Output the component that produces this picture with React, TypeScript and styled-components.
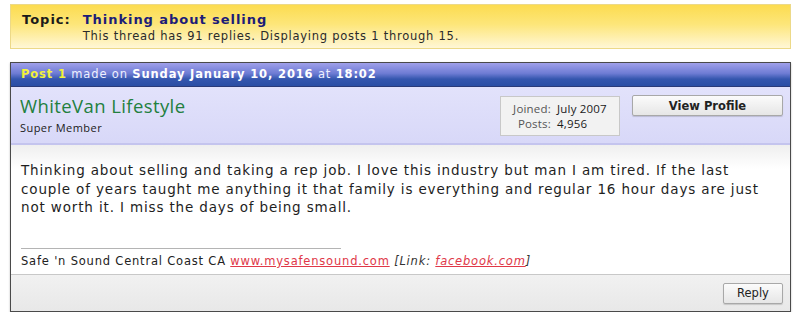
import styled, { createGlobalStyle } from 'styled-components';

const GlobalStyle = createGlobalStyle`
  body {
    margin: 0;
    background: #ffffff;
    font-family: "DejaVu Sans", Verdana, sans-serif;
    color: #222;
  }
`;

const Page = styled.div`
  width: 800px;
  padding: 4px 9px 0 10px;
  box-sizing: border-box;
`;

const TopicBox = styled.div`
  height: 45px;
  box-sizing: border-box;
  border: 1px solid #ecd988;
  background: linear-gradient(to bottom, #fcdc50 0%, #fde67a 45%, #fff7d6 100%);
  display: flex;
  padding: 7px 0 0 11px;
  gap: 12px;
`;

const TopicLabel = styled.div`
  font-size: 13px;
  font-weight: bold;
  letter-spacing: 1px;
  color: #1a1a1a;
  line-height: 16px;
`;

const TopicInfo = styled.div`
  display: flex;
  flex-direction: column;
`;

const TopicTitle = styled.div`
  font-size: 13px;
  font-weight: bold;
  letter-spacing: 0.95px;
  color: #1c1c78;
  line-height: 16px;
`;

const TopicSub = styled.div`
  font-size: 11.5px;
  letter-spacing: 0.75px;
  color: #2a2a2a;
  line-height: 16px;
`;

const Post = styled.div`
  margin-top: 13px;
  border: 1px solid #4a4a4a;
  box-shadow: 0 1px 2px rgba(0, 0, 0, 0.25);
`;

const PostHeader = styled.div`
  height: 24px;
  box-sizing: border-box;
  padding: 4px 0 0 10px;
  font-size: 11.5px;
  letter-spacing: 0.85px;
  color: #eef0ff;
  background: linear-gradient(to bottom, #a0a0ea 0%, #6e7cd4 45%, #3456ae 70%, #2a4ea4 100%);
  border-bottom: 1px solid #2a3a78;
  b {
    color: #ffffff;
  }
  .num {
    color: #f2f23a;
  }
`;

const UserRow = styled.div`
  height: 58px;
  box-sizing: border-box;
  display: flex;
  align-items: flex-start;
  padding: 8px 7px 0 9px;
  background: linear-gradient(to bottom, #e2e2fb 0%, #d8d8f8 100%);
  border-bottom: 2px solid #c4c4ee;
`;

const UserName = styled.div`
  flex: 1;
  display: flex;
  flex-direction: column;
`;

const Name = styled.div`
  font-family: "Open Sans", "DejaVu Sans", sans-serif;
  font-size: 18.5px;
  letter-spacing: 0.4px;
  color: #22803e;
  line-height: 22px;
`;

const Rank = styled.div`
  font-family: "Open Sans", "DejaVu Sans", sans-serif;
  font-size: 11px;
  letter-spacing: 0.45px;
  color: #1a1a1a;
  margin-top: 3px;
`;

const StatsBox = styled.div`
  width: 120px;
  height: 40px;
  box-sizing: border-box;
  margin-top: 1px;
  border: 1px solid #c8c8c8;
  background: #f2f2f2;
  display: grid;
  grid-template-columns: 50px auto;
  column-gap: 6px;
  align-content: center;
  font-family: "Open Sans", "DejaVu Sans", sans-serif;
  font-size: 11.5px;
  letter-spacing: 0.2px;
  line-height: 15px;
`;

const StatLabel = styled.span`
  text-align: right;
  color: #555;
`;

const StatValue = styled.span`
  color: #1a1a1a;
`;

const Button = styled.button<{ $width: number }>`
  width: ${(p) => p.$width}px;
  height: 21px;
  box-sizing: border-box;
  border: 1px solid #a8a8a8;
  border-radius: 2px;
  background: linear-gradient(to bottom, #fbfbfb 0%, #e6e6e6 100%);
  box-shadow: 0 1px 1px rgba(0, 0, 0, 0.15);
  font-family: "DejaVu Sans", Verdana, sans-serif;
  font-size: 11.5px;
  color: #222;
  padding: 0;
  cursor: pointer;
`;

const ProfileButton = styled(Button)`
  margin-left: 12px;
  font-weight: bold;
`;

const Body = styled.div`
  height: 130px;
  box-sizing: border-box;
  padding: 16px 10px 0 10px;
  background: linear-gradient(to bottom, #efefef 0px, #ffffff 24px);
  border-bottom: 1px solid #c8c8c8;
  display: flex;
  flex-direction: column;
`;

const Message = styled.p`
  margin: 0;
  font-size: 13.5px;
  letter-spacing: 0.85px;
  line-height: 18.5px;
  color: #1e1e1e;
  white-space: nowrap;
`;

const SigRule = styled.div`
  width: 320px;
  height: 1px;
  background: #b4b4b4;
  margin-top: auto;
`;

const Signature = styled.div`
  font-size: 11.5px;
  letter-spacing: 0.8px;
  color: #222;
  padding: 5px 0 6px;
  a {
    color: #e03848;
    text-decoration: underline;
  }
  i {
    color: #333;
  }
`;

const Footer = styled.div`
  height: 36px;
  box-sizing: border-box;
  display: flex;
  justify-content: flex-end;
  align-items: center;
  padding: 0 7px 0 0;
  background: linear-gradient(to bottom, #f1f1f1 0%, #e8e8e8 100%);
`;

export default function App() {
  return (
    <Page>
      <GlobalStyle />
      <TopicBox>
        <TopicLabel>Topic:</TopicLabel>
        <TopicInfo>
          <TopicTitle>Thinking about selling</TopicTitle>
          <TopicSub>This thread has 91 replies. Displaying posts 1 through 15.</TopicSub>
        </TopicInfo>
      </TopicBox>
      <Post>
        <PostHeader>
          <b className="num">Post 1</b> made on <b>Sunday January 10, 2016</b> at <b>18:02</b>
        </PostHeader>
        <UserRow>
          <UserName>
            <Name>WhiteVan Lifestyle</Name>
            <Rank>Super Member</Rank>
          </UserName>
          <StatsBox>
            <StatLabel>Joined:</StatLabel>
            <StatValue>July 2007</StatValue>
            <StatLabel>Posts:</StatLabel>
            <StatValue>4,956</StatValue>
          </StatsBox>
          <ProfileButton $width={151}>View Profile</ProfileButton>
        </UserRow>
        <Body>
          <Message>
            Thinking about selling and taking a rep job. I love this industry but man I am tired. If the last
            <br />
            couple of years taught me anything it that family is everything and regular 16 hour days are just
            <br />
            not worth it. I miss the days of being small.
          </Message>
          <SigRule />
          <Signature>
            Safe 'n Sound Central Coast CA <a href="#">www.mysafensound.com</a>{' '}
            <i>
              [Link: <a href="#">facebook.com</a>]
            </i>
          </Signature>
        </Body>
        <Footer>
          <Button $width={60}>Reply</Button>
        </Footer>
      </Post>
    </Page>
  );
}
